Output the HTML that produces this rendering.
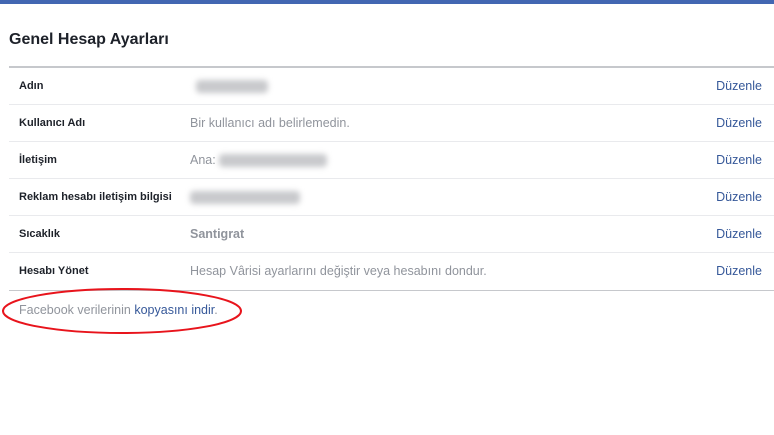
<!DOCTYPE html>
<html><head><style>
body{margin:0;width:774px;height:435px;background:#fff;font-family:"Liberation Sans",sans-serif;position:relative;overflow:hidden}
.top{position:absolute;left:0;top:0;width:774px;height:4px;background:#4267b2}
h1{position:absolute;left:9px;top:31px;margin:0;font-size:16px;font-weight:bold;color:#1d2129}
.line{position:absolute;left:9px;width:765px;height:1px;background:#e9eaed}
.row{position:absolute;left:9px;width:765px;height:37px;font-size:12px}
.l{position:absolute;left:10px;top:13px;font-weight:bold;color:#1d2129;font-size:11px}
.v{position:absolute;left:181px;top:12px;color:#90949c;font-size:12.5px}
.e{position:absolute;right:12px;top:12px;color:#365899;font-size:12.5px}
.b{display:inline-block;height:13px;background:#c8c9cc;filter:blur(3px);vertical-align:middle;border-radius:4px}
</style></head><body>
<div class="top"></div>
<h1>Genel Hesap Ayarları</h1>
<div class="line" style="top:66px;height:2px;background:#c6c8cc"></div>
<div class="row" style="top:67px"><span class="l">Adın</span><span class="v"><span class="b" style="width:72px;margin-left:6px"></span></span><span class="e">Düzenle</span></div>
<div class="line" style="top:104px"></div>
<div class="row" style="top:104px"><span class="l">Kullanıcı Adı</span><span class="v">Bir kullanıcı adı belirlemedin.</span><span class="e">Düzenle</span></div>
<div class="line" style="top:141px"></div>
<div class="row" style="top:141px"><span class="l">İletişim</span><span class="v">Ana: <span class="b" style="width:108px"></span></span><span class="e">Düzenle</span></div>
<div class="line" style="top:178px"></div>
<div class="row" style="top:178px"><span class="l">Reklam hesabı iletişim bilgisi</span><span class="v"><span class="b" style="width:110px"></span></span><span class="e">Düzenle</span></div>
<div class="line" style="top:215px"></div>
<div class="row" style="top:215px"><span class="l">Sıcaklık</span><span class="v" style="font-weight:bold">Santigrat</span><span class="e">Düzenle</span></div>
<div class="line" style="top:252px"></div>
<div class="row" style="top:252px"><span class="l">Hesabı Yönet</span><span class="v">Hesap Vârisi ayarlarını değiştir veya hesabını dondur.</span><span class="e">Düzenle</span></div>
<div class="line" style="top:290px;background:#c6c8cc"></div>
<div style="position:absolute;left:19px;top:303px;font-size:12.5px;color:#90949c">Facebook verilerinin <span style="color:#365899">kopyasını indir</span>.</div>
<svg style="position:absolute;left:0;top:0" width="774" height="435"><ellipse cx="122" cy="311" rx="119" ry="22" fill="none" stroke="#e8141c" stroke-width="2"/></svg>
</body></html>
